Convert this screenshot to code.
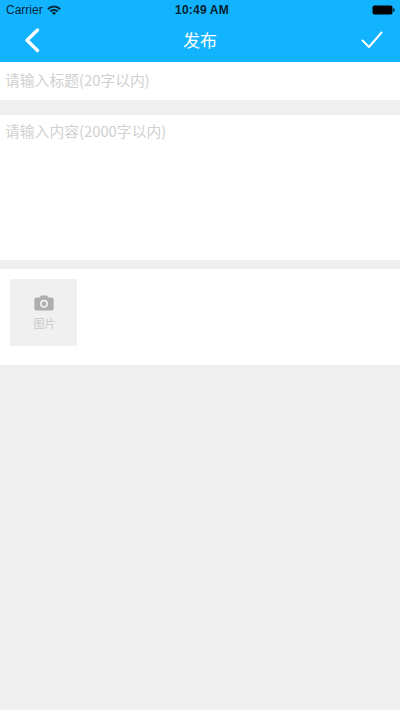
<script>
</script>

<div class="page">
  <header class="head">
    <div class="status">
      <div class="st-left">
        <span>Carrier</span>
        <svg class="wifi" width="14" height="10" viewBox="0 0 14 10">
          <path d="M0.2 3.4A9.6 9.6 0 0 1 13.8 3.4L12.4 4.9A7.5 7.5 0 0 0 1.6 4.9Z" fill="#06263a"/>
          <path d="M2.6 5.8A6.2 6.2 0 0 1 11.4 5.8L10 7.2A4.2 4.2 0 0 0 4 7.2Z" fill="#06263a"/>
          <path d="M4.9 8.1A3 3 0 0 1 9.1 8.1L7 10Z" fill="#06263a"/>
        </svg>
      </div>
      <span class="time">10:49 AM</span>
      <svg class="battery" width="23" height="10" viewBox="0 0 23 10">
        <rect x="0.5" y="0.5" width="20" height="9" rx="2" fill="#000"/>
        <rect x="21" y="3.2" width="1.6" height="3.6" rx="0.8" fill="#06263a"/>
      </svg>
    </div>
    <div class="nav">
      <svg class="back" width="18" height="26" viewBox="0 0 18 26">
        <path d="M14.5 3L4 13.2L14.5 23.5" fill="none" stroke="#fff" stroke-width="3.4" stroke-linecap="round" stroke-linejoin="round"/>
      </svg>
      <span class="title">发布</span>
      <svg class="check" width="22" height="18" viewBox="0 0 22 18">
        <path d="M1.5 9.5L8 16L20.5 1.5" fill="none" stroke="#fff" stroke-width="2" stroke-linecap="round" stroke-linejoin="round"/>
      </svg>
    </div>
  </header>

  <div class="field title-field">请输入标题(20字以内)</div>
  <div class="field body-field">请输入内容(2000字以内)</div>

  <section class="media">
    <div class="pick">
      <svg width="20" height="16" viewBox="0 0 20 16">
        <path fill-rule="evenodd" d="M2 2.5H5.6L7 0.5H13L14.4 2.5H18A1.6 1.6 0 0 1 19.6 4.1V14A1.6 1.6 0 0 1 18 15.6H2A1.6 1.6 0 0 1 0.4 14V4.1A1.6 1.6 0 0 1 2 2.5ZM10 4.8A4 4 0 1 0 10 12.8A4 4 0 1 0 10 4.8ZM10 6.4A2.4 2.4 0 1 1 10 11.2A2.4 2.4 0 1 1 10 6.4Z" fill="#aeaeae"/>
      </svg>
      <span class="pick-label">图片</span>
    </div>
  </section>
</div>

<style>
  :global(body) {
    margin: 0;
  }
  .page {
    width: 400px;
    height: 710px;
    overflow: hidden;
    background: #f0f0f0;
    font-family: "Noto Sans CJK SC", "Liberation Sans", sans-serif;
  }
  .head {
    height: 62px;
    background: #12b4ff;
    box-sizing: border-box;
  }
  .status {
    height: 20px;
    padding: 0 6px;
    display: flex;
    align-items: center;
    justify-content: space-between;
    position: relative;
    color: #06263a;
    font-family: "Liberation Sans", sans-serif;
    font-size: 12px;
  }
  .st-left {
    display: flex;
    align-items: center;
    gap: 4px;
  }
  .time {
    position: absolute;
    left: 4px;
    right: 0;
    text-align: center;
    font-weight: 700;
    font-size: 12px;
    letter-spacing: 0.2px;
    color: #04202f;
  }
  .battery {
    margin-right: -1px;
  }
  .nav {
    height: 40px;
    display: flex;
    align-items: center;
    justify-content: space-between;
    padding: 0 17px 0 23px;
    position: relative;
  }
  .title {
    position: absolute;
    left: 0;
    right: 0;
    text-align: center;
    color: #fff;
    font-size: 17px;
    line-height: 20px;
  }
  .field {
    background: #fff;
    color: #d0d0d0;
    font-size: 14.8px;
    line-height: 20px;
    padding: 8px 5px;
    box-sizing: border-box;
  }
  .title-field {
    height: 38px;
    margin-bottom: 15px;
  }
  .body-field {
    height: 145px;
    padding-top: 6px;
    margin-bottom: 9px;
  }
  .media {
    height: 96px;
    background: #fff;
    padding: 10px;
    box-sizing: border-box;
  }
  .pick {
    width: 67px;
    height: 67px;
    background: #f0f0f0;
    display: flex;
    flex-direction: column;
    align-items: center;
    justify-content: center;
    gap: 5px;
    color: #c8c8c8;
    font-size: 11px;
    line-height: 14px;
  }
  .pick-label {
    padding-left: 2px;
  }
</style>
